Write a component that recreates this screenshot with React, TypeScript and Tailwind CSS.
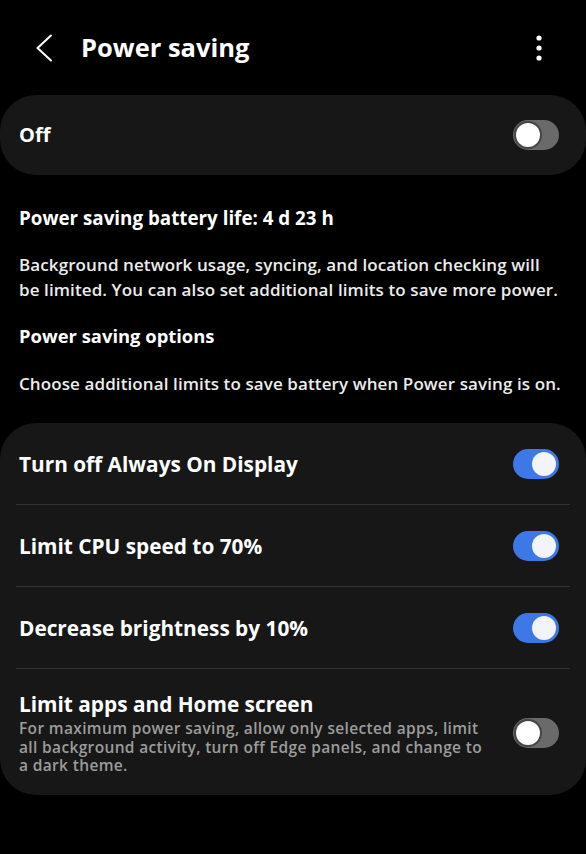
import React, { useState } from 'react';

interface Option {
  id: string;
  title: string;
  description?: string[];
  enabled: boolean;
}

const Toggle: React.FC<{ on: boolean; onChange: () => void }> = ({ on, onChange }) => (
  <button
    onClick={onChange}
    className={`relative flex h-[30px] w-[46px] shrink-0 items-center rounded-full px-[3px] ${
      on ? 'justify-end bg-[#3d78e6]' : 'justify-start bg-[#6a6a6a]'
    }`}
    aria-pressed={on}
  >
    <span
      className={`h-[24px] w-[24px] rounded-full ${
        on ? 'bg-[#f3f4fa]' : 'bg-white shadow-[0_0_0_2px_#454545]'
      }`}
    />
  </button>
);

export default function App() {
  const [masterOn, setMasterOn] = useState(false);
  const [options, setOptions] = useState<Option[]>([
    { id: 'aod', title: 'Turn off Always On Display', enabled: true },
    { id: 'cpu', title: 'Limit CPU speed to 70%', enabled: true },
    { id: 'bright', title: 'Decrease brightness by 10%', enabled: true },
    {
      id: 'apps',
      title: 'Limit apps and Home screen',
      description: [
        'For maximum power saving, allow only selected apps, limit',
        'all background activity, turn off Edge panels, and change to',
        'a dark theme.',
      ],
      enabled: false,
    },
  ]);

  const toggleOption = (id: string) =>
    setOptions((prev) => prev.map((o) => (o.id === id ? { ...o, enabled: !o.enabled } : o)));

  return (
    <div className="min-h-[854px] w-full bg-black text-white [font-family:'Open_Sans',Roboto,sans-serif]">
      {/* Header */}
      <div className="flex h-[95px] items-center pl-[34px] pr-[43px]">
        <svg width="20" height="28" viewBox="0 0 20 28" fill="none" className="shrink-0">
          <path d="M17 1.5 L3.5 14 L17 26.5" stroke="#ffffff" strokeWidth="2" strokeLinecap="round" strokeLinejoin="round" />
        </svg>
        <h1 className="ml-[27px] flex-1 text-[25.5px] font-bold">Power saving</h1>
        <svg width="8" height="26" viewBox="0 0 8 26" className="shrink-0">
          <circle cx="4" cy="3" r="2.6" fill="#ffffff" />
          <circle cx="4" cy="13" r="2.6" fill="#ffffff" />
          <circle cx="4" cy="23" r="2.6" fill="#ffffff" />
        </svg>
      </div>

      {/* Master switch */}
      <div className="flex h-[80px] items-center justify-between rounded-[36px] bg-[#171717] pl-[19px] pr-[27px]">
        <span className="text-[20px] font-bold">Off</span>
        <Toggle on={masterOn} onChange={() => setMasterOn(!masterOn)} />
      </div>

      {/* Info text */}
      <div className="flex flex-col px-[19px] pt-[31px] pb-[27px] text-[#ececec]">
        <p className="text-[18.8px] font-bold leading-[24px] text-white">Power saving battery life: 4 d 23 h</p>
        <p className="mt-[22px] text-[17px] font-semibold leading-[25px] tracking-[0.1px]">
          Background network usage, syncing, and location checking will
          <br />
          be limited. You can also set additional limits to save more power.
        </p>
        <p className="mt-[22px] text-[18.4px] font-bold leading-[24px] text-white">Power saving options</p>
        <p className="mt-[23px] text-[17px] font-semibold leading-[25px] tracking-[0.1px]">
          Choose additional limits to save battery when Power saving is on.
        </p>
      </div>

      {/* Options */}
      <div className="rounded-[36px] bg-[#171717]">
        {options.map((opt, i) => (
          <div key={opt.id} className={i > 0 ? 'mx-[16px] border-t border-[#333333]' : 'mx-[16px]'}>
            <div
              className={`flex items-center justify-between pl-[3px] pr-[11px] ${
                opt.description ? 'pt-[22px] pb-[20px]' : 'h-[81px]'
              }`}
            >
              <div className="flex flex-col">
                <span className="text-[20.8px] font-bold leading-[26px]">{opt.title}</span>
                {opt.description && (
                  <span className="mt-[2px] text-[15.5px] font-semibold leading-[18.5px] tracking-[0.35px] text-[#9c9c9c]">
                    {opt.description.map((line, j) => (
                      <React.Fragment key={j}>
                        {j > 0 && <br />}
                        {line}
                      </React.Fragment>
                    ))}
                  </span>
                )}
              </div>
              <Toggle on={opt.enabled} onChange={() => toggleOption(opt.id)} />
            </div>
          </div>
        ))}
      </div>
    </div>
  );
}
